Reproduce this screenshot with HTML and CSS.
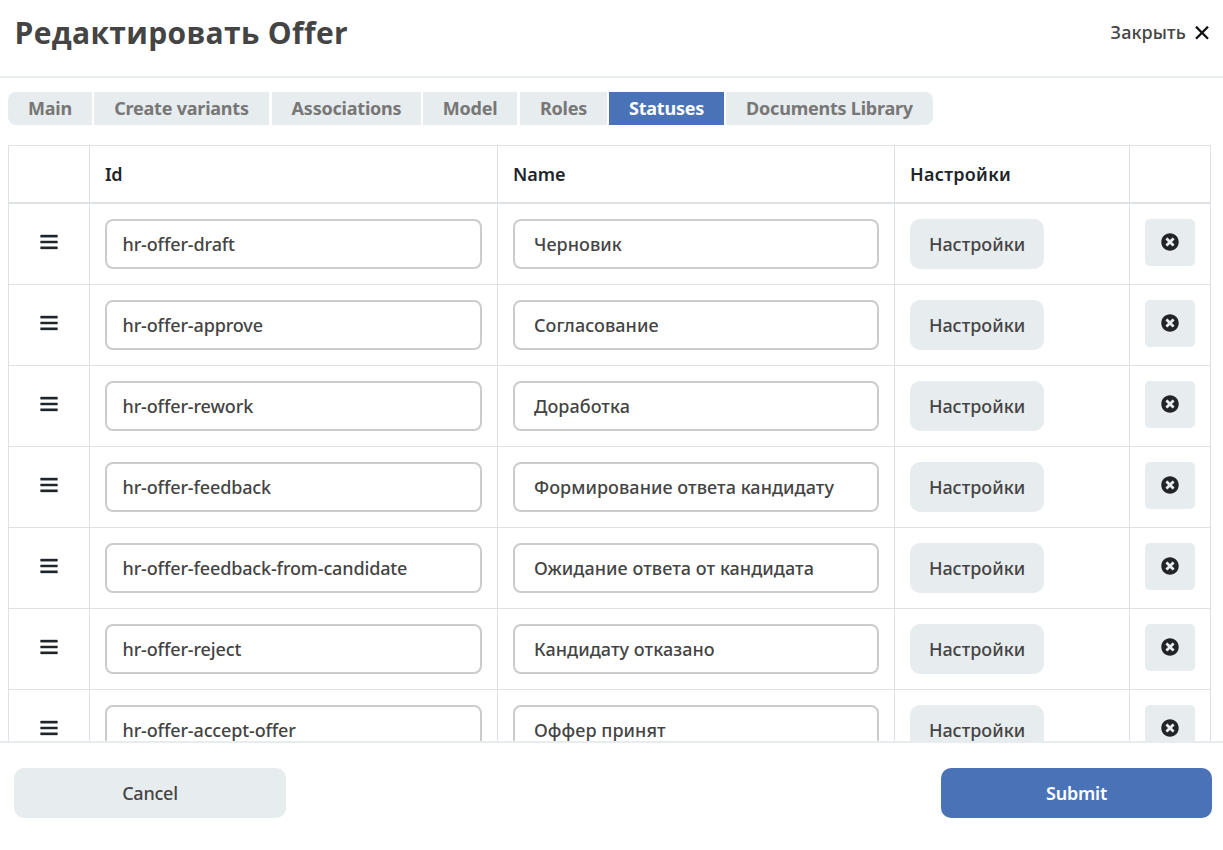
FILE: index.html
```
<!DOCTYPE html>
<html lang="ru">
<head>
<meta charset="utf-8">
<title>Редактировать Offer</title>
<link rel="stylesheet" href="styles.css">
</head>
<body>
<svg width="0" height="0" class="sprite" aria-hidden="true">
  <symbol id="bars" viewBox="0 0 18 16"><path d="M.6 1h16.800v2.200H.6zM.6 6.900h16.800v2.200H.6zM.6 12.700h16.800v2.200H.6z" fill="currentColor" stroke="currentColor" stroke-width=".4" stroke-linejoin="round"/></symbol>
  <symbol id="remove" viewBox="0 0 512 512"><path fill="currentColor" d="M256 8C119 8 8 119 8 256s111 248 248 248 248-111 248-248S393 8 256 8zm121.600 313.100c4.700 4.700 4.700 12.300 0 17L338 377.600c-4.700 4.700-12.300 4.700-17 0L256 312l-65.100 65.600c-4.700 4.700-12.300 4.700-17 0L134.400 338c-4.700-4.700-4.700-12.300 0-17l65.600-65-65.600-65.100c-4.700-4.700-4.700-12.300 0-17l39.600-39.600c4.700-4.700 12.300-4.700 17 0l65 65.700 65.100-65.600c4.700-4.700 12.300-4.700 17 0l39.600 39.600c4.700 4.700 4.700 12.300 0 17L312 256l65.600 65.100z"/></symbol>
</svg>
<div class="modal">
  <header class="modal-header">
    <h1 class="title">Редактировать Offer</h1>
    <button class="close"><span>Закрыть</span><svg class="close-icon" viewBox="0 0 14 14"><path d="M1 .7l12 12M13 .7L1 12.700" stroke="currentColor" stroke-width="2.3"/></svg></button>
  </header>
  <main class="modal-body">
    <nav class="tabs">
      <a class="tab tab-main">Main</a><a class="tab tab-create">Create variants</a><a class="tab tab-assoc">Associations</a><a class="tab tab-model">Model</a><a class="tab tab-roles">Roles</a><a class="tab tab-statuses active">Statuses</a><a class="tab tab-docs">Documents Library</a>
    </nav>
    <div class="table">
      <div class="row head"><div class="cell"></div><div class="cell id-head">Id</div><div class="cell">Name</div><div class="cell wide">Настройки</div><div class="cell"></div></div>
      <div class="row"><div class="cell handle"><svg class="bars"><use href="#bars"/></svg></div><div class="cell"><div class="input">hr-offer-draft</div></div><div class="cell"><div class="input name">Черновик</div></div><div class="cell"><button class="settings">Настройки</button></div><div class="cell"><button class="delete"><svg class="remove"><use href="#remove"/></svg></button></div></div>
      <div class="row"><div class="cell handle"><svg class="bars"><use href="#bars"/></svg></div><div class="cell"><div class="input">hr-offer-approve</div></div><div class="cell"><div class="input name">Согласование</div></div><div class="cell"><button class="settings">Настройки</button></div><div class="cell"><button class="delete"><svg class="remove"><use href="#remove"/></svg></button></div></div>
      <div class="row"><div class="cell handle"><svg class="bars"><use href="#bars"/></svg></div><div class="cell"><div class="input">hr-offer-rework</div></div><div class="cell"><div class="input name">Доработка</div></div><div class="cell"><button class="settings">Настройки</button></div><div class="cell"><button class="delete"><svg class="remove"><use href="#remove"/></svg></button></div></div>
      <div class="row"><div class="cell handle"><svg class="bars"><use href="#bars"/></svg></div><div class="cell"><div class="input">hr-offer-feedback</div></div><div class="cell"><div class="input name">Формирование ответа кандидату</div></div><div class="cell"><button class="settings">Настройки</button></div><div class="cell"><button class="delete"><svg class="remove"><use href="#remove"/></svg></button></div></div>
      <div class="row"><div class="cell handle"><svg class="bars"><use href="#bars"/></svg></div><div class="cell"><div class="input">hr-offer-feedback-from-candidate</div></div><div class="cell"><div class="input name">Ожидание ответа от кандидата</div></div><div class="cell"><button class="settings">Настройки</button></div><div class="cell"><button class="delete"><svg class="remove"><use href="#remove"/></svg></button></div></div>
      <div class="row"><div class="cell handle"><svg class="bars"><use href="#bars"/></svg></div><div class="cell"><div class="input">hr-offer-reject</div></div><div class="cell"><div class="input name">Кандидату отказано</div></div><div class="cell"><button class="settings">Настройки</button></div><div class="cell"><button class="delete"><svg class="remove"><use href="#remove"/></svg></button></div></div>
      <div class="row"><div class="cell handle"><svg class="bars"><use href="#bars"/></svg></div><div class="cell"><div class="input">hr-offer-accept-offer</div></div><div class="cell"><div class="input name">Оффер принят</div></div><div class="cell"><button class="settings">Настройки</button></div><div class="cell"><button class="delete"><svg class="remove"><use href="#remove"/></svg></button></div></div>
    </div>
  </main>
  <footer class="modal-footer">
    <button class="action cancel">Cancel</button>
    <button class="action submit">Submit</button>
  </footer>
</div>
</body>
</html>
```
FILE: styles.css
```
* { box-sizing: border-box; }
body { margin: 0; background: #fff; color: #444; font: 500 18px/27px "Noto Sans", sans-serif; }
button { border: 0; padding: 0; margin: 0; background: none; font: inherit; color: inherit; }
.sprite { display: none; }
.modal { display: flex; flex-direction: column; width: 100%; height: 850px; overflow: hidden; }
.modal-header { flex: none; display: flex; justify-content: space-between; height: 78px; padding: 10px 14px 0 14.500px; border-bottom: 2px solid #e7ecee; }
.title { margin: 0; font-family: "Open Sans", "Noto Sans", sans-serif; font-size: 30px; line-height: 45px; font-weight: 700; letter-spacing: .33px; color: #444; }
.close { display: flex; align-items: center; gap: 9px; height: 45px; letter-spacing: .12px; }
.close-icon { width: 14px; height: 14px; color: #111; }
.modal-body { flex: 1; min-height: 0; overflow: hidden; padding: 14px 12px 0 8px; }
.tabs { display: flex; gap: 2px; height: 33px; margin-bottom: 20px; }
.tab { display: flex; justify-content: center; background: #e7ecee; color: #777; font-weight: 700; line-height: 33px; letter-spacing: -.22px; white-space: nowrap; }
.tab-main { width: 84px; border-radius: 8px 0 0 8px; }
.tab-create { width: 175px; margin-right: 1px; }
.tab-assoc { width: 149px; }
.tab-model { width: 94px; margin-right: 1px; }
.tab-roles { width: 87px; }
.tab-statuses { width: 115px; }
.tab-docs { width: 207px; border-radius: 0 8px 8px 0; }
.tab.active { background: #4a73b7; color: #fff; }
.table { border-top: 1px solid #dee2e6; border-right: 1px solid #dee2e6; }
.row { display: grid; grid-template-columns: 81px 408px 397px 235px 81px; height: 81px; border-bottom: 1px solid #dee2e6; }
.row.head { height: 58px; border-bottom-width: 2px; color: #212529; font-weight: 600; }
.cell { padding: 15px; border-left: 1px solid #dee2e6; }
.cell.id-head { letter-spacing: -.5px; }
.cell.wide { letter-spacing: .28px; }
.handle { display: flex; justify-content: center; }
.bars { width: 18px; height: 16px; margin-top: 15px; color: #212529; }
.input { height: 50px; padding: 10px 15.500px; border: 2px solid #ccc; border-radius: 8px; line-height: 27px; letter-spacing: -.14px; white-space: nowrap; }
.input.name { padding-left: 19px; letter-spacing: .05px; }
.settings { width: 134px; height: 50px; border-radius: 10px; background: #e7ecee; }
.delete { display: flex; justify-content: center; align-items: center; width: 50px; height: 47px; border-radius: 5px; background: #e7ecee; color: #212529; }
.remove { width: 18px; height: 18px; margin-bottom: 1px; }
.modal-footer { flex: none; display: flex; justify-content: space-between; align-items: flex-start; height: 109px; padding: 25px 11px 0 14px; border-top: 2px solid #e7ecee; }
.action { width: 272px; height: 50px; border-radius: 10px; letter-spacing: -.22px; }
.cancel { background: #e7ecee; }
.submit { width: 271px; background: #4a73b7; color: #fff; font-weight: 600; }
```
